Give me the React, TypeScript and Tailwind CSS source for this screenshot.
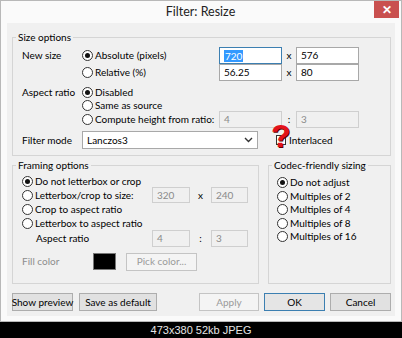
import React from 'react';

const ui = { fontFamily: 'Lato, "Liberation Sans", sans-serif' };

function Radio({ checked = false }: { checked?: boolean }) {
  return (
    <span className="flex h-[11px] w-[11px] shrink-0 items-center justify-center rounded-full border border-[#333] bg-white">
      {checked && <span className="h-[5px] w-[5px] rounded-full bg-[#111]" />}
    </span>
  );
}

function RadioLabel({ checked, label }: { checked?: boolean; label: string }) {
  return (
    <span className="flex items-center gap-[2px]">
      <Radio checked={checked} />
      <span className="text-[#000]">{label}</span>
    </span>
  );
}

function Field({
  value,
  width,
  height = 'h-[17px]',
  disabled = false,
  selected = false,
}: {
  value: string;
  width: string;
  height?: string;
  disabled?: boolean;
  selected?: boolean;
}) {
  const tone = selected
    ? 'border-[#3c7fb1] bg-white'
    : disabled
      ? 'border-[#cfcfcf] bg-[#f0f0f0] text-[#8a8a8a]'
      : 'border-[#a8a8a8] bg-white text-[#000]';
  return (
    <span className={`flex shrink-0 items-center border pl-[4px] ${width} ${height} ${tone}`}>
      {selected ? <span className="bg-[#3399ff] px-[1px] leading-[12px] text-white">{value}</span> : value}
    </span>
  );
}

function Button({
  label,
  width,
  variant = 'normal',
}: {
  label: string;
  width: string;
  variant?: 'normal' | 'default' | 'disabled';
}) {
  const tone =
    variant === 'default'
      ? 'border-[#3c7fb1] bg-[#e5e5e5] text-[#000]'
      : variant === 'disabled'
        ? 'border-[#c4c4c4] bg-[#f4f4f4] text-[#9a9a9a]'
        : 'border-[#adadad] bg-[#e1e1e1] text-[#000]';
  return (
    <span
      className={`flex h-[18px] shrink-0 items-center justify-center whitespace-nowrap border ${width} ${tone}`}
    >
      {label}
    </span>
  );
}

function Group({
  title,
  className,
  bodyClass,
  children,
}: {
  title: string;
  className: string;
  bodyClass: string;
  children: React.ReactNode;
}) {
  return (
    <fieldset className={`border border-[#d5d5d5] ${className}`}>
      <legend className="ml-[3px] px-[2px] leading-[12px] text-[#000]">{title}</legend>
      <div className={bodyClass}>{children}</div>
    </fieldset>
  );
}

export default function App() {
  return (
    <div className="flex h-[338px] w-[402px] flex-col bg-black text-[10px] text-[#000]" style={ui}>
      <div className="flex h-[322px] flex-col border border-[#b8b8b8] bg-[#fafafa]">
        {/* title bar */}
        <div className="flex h-[22px] shrink-0 items-start">
          <span className="w-[26px]" />
          <span className="flex h-[22px] flex-1 items-center justify-center text-[12.5px] text-[#222]">
            Filter: Resize
          </span>
          <span className="mr-[2px] flex h-[17px] w-[25px] items-center justify-center bg-[#c9504f] text-[12px] font-bold leading-none text-white">
            ✕
          </span>
        </div>

        {/* client area */}
        <div className="mx-[6px] flex h-[293px] flex-col bg-[#f0f0f0] pt-[8px]">
          <Group title="Size options" className="ml-[5px] w-[379px]" bodyClass="pb-[6px] pl-[9px]">
            <div className="mt-[4px] flex h-[17px] items-center">
              <span className="w-[60px]">New size</span>
              <span className="w-[137px]">
                <RadioLabel checked label="Absolute (pixels)" />
              </span>
              <Field value="720" width="w-[63px]" selected />
              <span className="w-[14px] text-center">x</span>
              <Field value="576" width="w-[63px]" />
            </div>
            <div className="flex h-[17px] items-center">
              <span className="w-[60px]" />
              <span className="w-[137px]">
                <RadioLabel label="Relative (%)" />
              </span>
              <Field value="56.25" width="w-[63px]" />
              <span className="w-[14px] text-center">x</span>
              <Field value="80" width="w-[63px]" />
            </div>
            <div className="mt-[4px] flex h-[14px] items-center">
              <span className="w-[60px]">Aspect ratio</span>
              <RadioLabel checked label="Disabled" />
            </div>
            <div className="flex h-[13px] items-center">
              <span className="w-[60px]" />
              <RadioLabel label="Same as source" />
            </div>
            <div className="flex h-[15px] items-center">
              <span className="w-[60px]" />
              <span className="w-[137px]">
                <RadioLabel label="Compute height from ratio:" />
              </span>
              <Field value="4" width="w-[63px]" disabled />
              <span className="w-[14px] text-center">:</span>
              <Field value="3" width="w-[63px]" disabled />
            </div>
            <div className="mt-[4px] flex h-[18px] items-center">
              <span className="w-[60px]">Filter mode</span>
              <span className="flex h-[18px] w-[176px] items-center justify-between border border-[#a8a8a8] bg-white pl-[4px] pr-[4px]">
                Lanczos3
                <svg width="9" height="6" viewBox="0 0 9 6">
                  <path d="M1 1l3.5 3.5L8 1" fill="none" stroke="#333" strokeWidth="1.4" />
                </svg>
              </span>
              <span className="relative ml-[18px] flex items-center gap-[3px]">
                <span className="h-[10px] w-[10px] border border-[#333] bg-white" />
                Interlaced
                <span
                  className="absolute left-[-5px] top-[-8px] text-[32px] font-bold leading-[22px] text-[#e3121b] [text-shadow:1px_1px_0_#5a0000]"
                  style={{ fontFamily: '"Liberation Sans", sans-serif' }}
                >
                  ?
                </span>
              </span>
            </div>
          </Group>

          <div className="ml-[5px] mt-[3px] flex gap-[9px]">
            <Group title="Framing options" className="h-[125px] w-[247px]" bodyClass="pl-[9px]">
              <div className="mt-[3px] flex h-[14px] items-center">
                <RadioLabel checked label="Do not letterbox or crop" />
              </div>
              <div className="flex h-[14px] items-center">
                <span className="w-[130px]">
                  <RadioLabel label="Letterbox/crop to size:" />
                </span>
                <Field value="320" width="w-[38px]" height="h-[16px]" disabled />
                <span className="w-[21px] text-center">x</span>
                <Field value="240" width="w-[37px]" height="h-[16px]" disabled />
              </div>
              <div className="flex h-[14px] items-center">
                <RadioLabel label="Crop to aspect ratio" />
              </div>
              <div className="flex h-[14px] items-center">
                <RadioLabel label="Letterbox to aspect ratio" />
              </div>
              <div className="flex h-[17px] items-center">
                <span className="w-[130px] pl-[14px]">Aspect ratio</span>
                <Field value="4" width="w-[38px]" disabled />
                <span className="w-[21px] text-center">:</span>
                <Field value="3" width="w-[37px]" disabled />
              </div>
              <div className="mt-[6px] flex h-[17px] items-center">
                <span className="w-[71px] text-[#8d8d8d]">Fill color</span>
                <span className="h-[17px] w-[23px] border border-[#777] bg-black" />
                <span className="ml-[10px]">
                  <Button label="Pick color..." width="w-[71px]" variant="disabled" />
                </span>
              </div>
            </Group>

            <Group title="Codec-friendly sizing" className="h-[125px] w-[123px]" bodyClass="pl-[8px]">
              <div className="mt-[5px] flex h-[13.5px] items-center">
                <RadioLabel checked label="Do not adjust" />
              </div>
              <div className="flex h-[13.5px] items-center">
                <RadioLabel label="Multiples of 2" />
              </div>
              <div className="flex h-[13.5px] items-center">
                <RadioLabel label="Multiples of 4" />
              </div>
              <div className="flex h-[13.5px] items-center">
                <RadioLabel label="Multiples of 8" />
              </div>
              <div className="flex h-[13.5px] items-center">
                <RadioLabel label="Multiples of 16" />
              </div>
            </Group>
          </div>

          <div className="ml-[5px] mt-[9px] flex w-[379px] items-center">
            <Button label="Show preview" width="w-[61px]" />
            <span className="ml-[6px]">
              <Button label="Save as default" width="w-[78px]" />
            </span>
            <span className="flex-1" />
            <Button label="Apply" width="w-[60px]" variant="disabled" />
            <span className="ml-[5px]">
              <Button label="OK" width="w-[61px]" variant="default" />
            </span>
            <span className="ml-[5px]">
              <Button label="Cancel" width="w-[61px]" />
            </span>
          </div>
        </div>
      </div>

      <div
        className="flex h-[16px] items-center justify-center text-[11px] text-[#e6e6e6]"
        style={{ fontFamily: '"Liberation Sans", sans-serif' }}
      >
        473x380 52kb JPEG
      </div>
    </div>
  );
}
